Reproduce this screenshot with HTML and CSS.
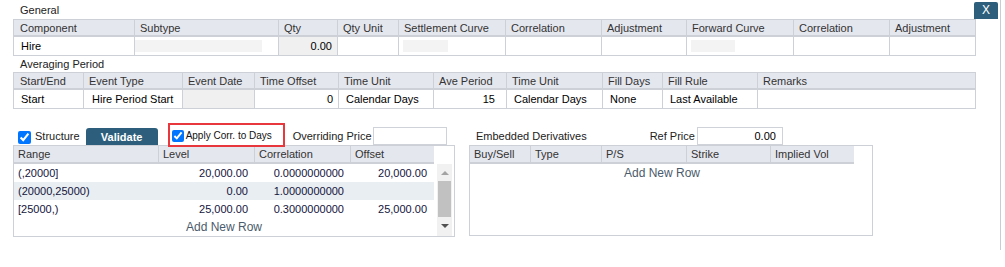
FILE: index.html
```html
<!DOCTYPE html>
<html lang="en">
<head>
<meta charset="utf-8">
<title>Component</title>
<link rel="stylesheet" href="styles.css">
</head>
<body>
<div class="page">
  <div class="titlebar">
    <span class="section-label">General</span>
    <button class="close-btn" type="button">X</button>
  </div>
  <table class="grid">
    <colgroup>
      <col style="width:121px"><col style="width:144px"><col style="width:59px"><col style="width:61px"><col style="width:107px">
      <col style="width:96px"><col style="width:85px"><col style="width:107px"><col style="width:96px"><col style="width:86px">
    </colgroup>
    <thead>
      <tr><th>Component</th><th>Subtype</th><th>Qty</th><th>Qty Unit</th><th>Settlement Curve</th><th>Correlation</th><th>Adjustment</th><th>Forward Curve</th><th>Correlation</th><th>Adjustment</th></tr>
    </thead>
    <tbody>
      <tr>
        <td>Hire</td>
        <td class="ph-cell"><span class="placeholder ph-subtype"></span></td>
        <td class="num readonly">0.00</td>
        <td></td>
        <td class="ph-cell"><span class="placeholder ph-curve"></span></td>
        <td></td>
        <td></td>
        <td class="ph-cell"><span class="placeholder ph-fwd"></span></td>
        <td></td>
        <td></td>
      </tr>
    </tbody>
  </table>

  <div class="section-label avg-label">Averaging Period</div>
  <table class="grid">
    <colgroup>
      <col style="width:70px"><col style="width:99px"><col style="width:72px"><col style="width:84px"><col style="width:95px">
      <col style="width:73px"><col style="width:96px"><col style="width:60px"><col style="width:95px"><col style="width:218px">
    </colgroup>
    <thead>
      <tr><th>Start/End</th><th>Event Type</th><th>Event Date</th><th>Time Offset</th><th>Time Unit</th><th>Ave Period</th><th>Time Unit</th><th>Fill Days</th><th>Fill Rule</th><th>Remarks</th></tr>
    </thead>
    <tbody>
      <tr>
        <td>Start</td>
        <td class="wide-pad">Hire Period Start</td>
        <td class="readonly"></td>
        <td class="num">0</td>
        <td>Calendar Days</td>
        <td class="num num-wide">15</td>
        <td>Calendar Days</td>
        <td>None</td>
        <td>Last Available</td>
        <td></td>
      </tr>
    </tbody>
  </table>

  <div class="lower">
    <div class="structure">
      <div class="controls">
        <input class="chk chk-structure" type="checkbox" checked>
        <span class="ctl-text structure-text">Structure</span>
        <button class="validate" type="button">Validate</button>
        <label class="highlight"><input class="chk chk-small" type="checkbox" checked><span class="small-text">Apply Corr. to Days</span></label>
        <span class="ctl-text override-text">Overriding Price</span>
        <input class="field override-field" type="text" value="">
      </div>
      <div class="list-box">
        <div class="list-main">
          <div class="list-head struct-cols">
            <span>Range</span><span>Level</span><span>Correlation</span><span>Offset</span>
          </div>
          <div class="list-row struct-cols">
            <span>(,20000]</span><span class="r">20,000.00</span><span class="r">0.0000000000</span><span class="r">20,000.00</span>
          </div>
          <div class="list-row struct-cols alt">
            <span>(20000,25000)</span><span class="r">0.00</span><span class="r">1.0000000000</span><span class="r"></span>
          </div>
          <div class="list-row struct-cols">
            <span>[25000,)</span><span class="r">25,000.00</span><span class="r">0.3000000000</span><span class="r">25,000.00</span>
          </div>
          <div class="add-row">Add New Row</div>
        </div>
        <div class="scroll-col">
          <div class="scrollbar">
            <div class="arrow-box"><span class="arrow-up"></span></div>
            <div class="thumb"></div>
            <div class="arrow-box"><span class="arrow-down"></span></div>
          </div>
        </div>
      </div>
    </div>

    <div class="derivs">
      <div class="controls">
        <span class="ctl-text deriv-title">Embedded Derivatives</span>
        <span class="ctl-text ref-text">Ref Price</span>
        <input class="field ref-field" type="text" value="0.00">
      </div>
      <div class="deriv-box">
        <div class="list-head deriv-cols">
          <span>Buy/Sell</span><span>Type</span><span>P/S</span><span>Strike</span><span>Implied Vol</span>
        </div>
        <div class="add-row deriv-add">Add New Row</div>
      </div>
    </div>
  </div>
</div>
</body>
</html>
```

FILE: styles.css
```css
* {
  box-sizing: border-box;
}

body {
  margin: 0;
  background: #ffffff;
  font-family: "Liberation Sans", Arial, sans-serif;
  font-size: 11px;
  color: #222222;
}

.page {
  width: 1001px;
  height: 250px;
  border-right: 1px solid #c9ccd2;
  padding-left: 13px;
}

.titlebar {
  height: 19px;
  display: flex;
  align-items: flex-end;
  justify-content: space-between;
  padding-right: 2px;
}

.section-label {
  padding-left: 7px;
  line-height: 13px;
  padding-bottom: 2px;
  color: #222222;
}

.avg-label {
  height: 16px;
  line-height: 16px;
  padding-bottom: 0;
}

.close-btn {
  width: 24px;
  height: 17px;
  border: 0;
  border-radius: 2px 2px 0 0;
  background: #2d5f7d;
  color: #ffffff;
  font-family: "Liberation Sans", Arial, sans-serif;
  font-size: 12px;
  padding: 0;
  line-height: 17px;
}

/* ---------- tables ---------- */
.grid {
  border-collapse: separate;
  border-spacing: 0;
  table-layout: fixed;
  width: 963px;
  border-left: 1px solid #cdd0d6;
  border-top: 1px solid #cdd0d6;
}

.grid th,
.grid td {
  border-right: 1px solid #cdd0d6;
  border-bottom: 1px solid #cdd0d6;
  padding: 0 0 0 5px;
  white-space: nowrap;
  overflow: hidden;
  text-align: left;
  font-weight: normal;
}

.grid th {
  height: 17px;
  background: #e5e7ee;
  color: #333333;
  border-bottom-width: 2px;
}

.grid th:first-child {
  padding-left: 6px;
}

.grid td {
  height: 19px;
  color: #000000;
  padding-left: 7px;
}

.grid td.wide-pad {
  padding-left: 8px;
}

.grid td.num {
  text-align: right;
  padding-right: 5px;
}

.grid td.num-wide {
  padding-right: 11px;
}

.grid td.readonly {
  background: #f0f0f0;
}

.grid td.ph-cell {
  padding-left: 0;
}

.placeholder {
  display: block;
  height: 12px;
  background: #f3f3f3;
}

.ph-subtype {
  width: 127px;
}

.ph-curve {
  width: 45px;
  margin-left: 4px;
}

.ph-fwd {
  width: 44px;
  margin-left: 4px;
}

/* ---------- lower area ---------- */
.lower {
  display: flex;
  gap: 14px;
  margin-top: 14px;
}

.structure {
  width: 442px;
}

.controls {
  display: flex;
  align-items: flex-end;
  height: 22px;
}

.chk {
  margin: 0;
  width: 13px;
  height: 13px;
}

.chk-structure {
  margin-left: 5px;
  margin-bottom: 1px;
}

.ctl-text {
  line-height: 13px;
  margin-bottom: 2px;
  color: #222222;
  white-space: nowrap;
}

.structure-text {
  margin-left: 4px;
}

.validate {
  margin-left: 6px;
  width: 72px;
  height: 17px;
  border: 0;
  border-radius: 3px 3px 0 0;
  background: #2d5f7d;
  color: #ffffff;
  font-family: "Liberation Sans", Arial, sans-serif;
  font-size: 11px;
  font-weight: bold;
  padding: 0;
}

.highlight {
  position: relative;
  z-index: 1;
  margin-left: 10px;
  margin-bottom: -2px;
  height: 24px;
  width: 117px;
  border: 2px solid #e8383d;
  display: flex;
  align-items: center;
  padding-left: 2px;
}

.chk-small {
  width: 12px;
  height: 12px;
  margin-top: 1px;
}

.small-text {
  font-size: 10px;
  margin-left: 2px;
  color: #111111;
  white-space: nowrap;
}

.override-text {
  margin-left: 8px;
}

.field {
  height: 18px;
  border: 1px solid #cfd2d8;
  background: #ffffff;
  font-family: "Liberation Sans", Arial, sans-serif;
  font-size: 11px;
  color: #000000;
  padding: 0 6px;
  outline: none;
}

.override-field {
  width: 74px;
  margin-left: 1px;
}

.ref-field {
  width: 86px;
  margin-left: 2px;
  text-align: right;
}

/* ---------- list boxes ---------- */
.list-box {
  display: flex;
  height: 92px;
  border: 1px solid #cdd0d6;
}

.list-main {
  width: 420px;
}

.list-head {
  display: grid;
  height: 18px;
  background: #e5e7ee;
  border-bottom: 2px solid #cdd0d6;
  color: #333333;
}

.list-head span {
  padding-left: 4px;
  line-height: 16px;
  border-right: 1px solid #cdd0d6;
  white-space: nowrap;
  overflow: hidden;
}

.list-head span:last-child {
  border-right: 0;
}

.struct-cols {
  grid-template-columns: 145px 96px 96px 83px;
}

.list-row {
  display: grid;
  height: 18px;
  line-height: 18px;
  color: #14143c;
}

.list-row span {
  padding-left: 4px;
  white-space: nowrap;
}

.list-row span.r {
  text-align: right;
  padding-right: 7px;
}

.list-row.alt {
  background: #e8eef1;
}

.add-row {
  height: 18px;
  line-height: 18px;
  text-align: center;
  font-size: 12px;
  color: #4b5b6b;
}

.scroll-col {
  flex: 1;
  padding-top: 18px;
  padding-left: 3px;
}

.scrollbar {
  width: 15px;
  height: 72px;
  background: #f1f1f1;
  display: flex;
  flex-direction: column;
}

.arrow-box {
  height: 17px;
  display: flex;
  align-items: center;
  justify-content: center;
}

.thumb {
  height: 36px;
  margin: 0 1px;
  background: #c1c1c1;
}

.arrow-up {
  width: 0;
  height: 0;
  border-left: 4px solid transparent;
  border-right: 4px solid transparent;
  border-bottom: 4px solid #a3a3a3;
}

.arrow-down {
  width: 0;
  height: 0;
  border-left: 4px solid transparent;
  border-right: 4px solid transparent;
  border-top: 4px solid #505050;
}

/* ---------- derivatives ---------- */
.derivs {
  width: 404px;
}

.deriv-title {
  margin-left: 7px;
}

.ref-text {
  margin-left: 63px;
}

.deriv-box {
  height: 91px;
  border: 1px solid #cdd0d6;
}

.deriv-cols {
  width: 384px;
  grid-template-columns: 61px 71px 85px 84px 83px;
}

.deriv-add {
  width: 384px;
}
```
